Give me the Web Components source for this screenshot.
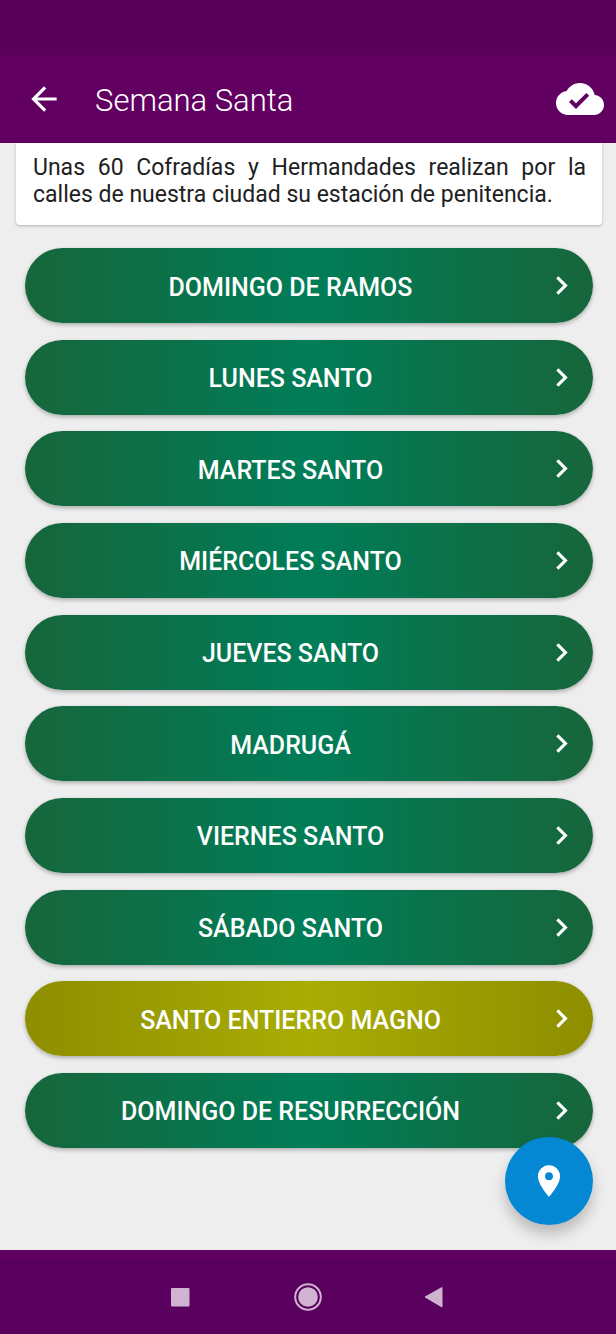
<!DOCTYPE html>
<html lang="es">
<head>
<meta charset="utf-8">
<meta name="viewport" content="width=device-width, initial-scale=1">
<title>Semana Santa</title>
<style>
  html { height: 100%; }
  body { margin: 0; min-height: 100%; display: flex; flex-direction: column; background: #eee; font-family: Roboto, "Noto Sans", sans-serif; }
</style>
</head>
<body>
<semana-app></semana-app>

<template id="app-tpl">
  <style>
    :host { display: flex; flex-direction: column; flex: 1; }
    main { flex: 1; display: flex; flex-direction: column; position: relative; }
    day-list { flex: 1; }
    map-fab { position: absolute; right: 23px; bottom: 25px; }
  </style>
  <app-header>Semana Santa</app-header>
  <main>
    <intro-card>Unas 60 Cofradías y Hermandades realizan por la calles de nuestra ciudad su estación de penitencia.</intro-card>
    <day-list>
      <day-button>Domingo de Ramos</day-button>
      <day-button>Lunes Santo</day-button>
      <day-button>Martes Santo</day-button>
      <day-button>Miércoles Santo</day-button>
      <day-button>Jueves Santo</day-button>
      <day-button>Madrugá</day-button>
      <day-button>Viernes Santo</day-button>
      <day-button>Sábado Santo</day-button>
      <day-button special>Santo Entierro Magno</day-button>
      <day-button>Domingo de Resurrección</day-button>
    </day-list>
    <map-fab></map-fab>
  </main>
  <system-nav></system-nav>
</template>

<template id="header-tpl">
  <style>
    :host { display: block; background: #620062; color: #fff; }
    .status { height: 55px; background: #5a005b; }
    .bar { display: flex; align-items: center; height: 88px; padding: 0 12px 0 25px; }
    button { border: 0; padding: 0; background: none; color: inherit; display: flex; }
    svg { display: block; fill: currentColor; }
    h1 { flex: 1; margin: 0 0 0 32px; padding-top: 3px; font-size: 31px; line-height: 40px; font-weight: 300; }
  </style>
  <div class="status"></div>
  <header class="bar">
    <button type="button" aria-label="Volver"><svg width="38" height="38" viewBox="0 0 24 24"><path d="M20 11H7.83l5.59-5.59L12 4l-8 8 8 8 1.41-1.41L7.83 13H20z"/></svg></button>
    <h1><slot></slot></h1>
    <button type="button" aria-label="Sincronizado"><svg width="48" height="48" viewBox="0 0 24 24"><path d="M19.35 10.04C18.67 6.59 15.64 4 12 4 9.11 4 6.6 5.64 5.35 8.04 2.34 8.36 0 10.91 0 14c0 3.31 2.69 6 6 6h13c2.76 0 5-2.24 5-5 0-2.64-2.05-4.78-4.65-4.96zM10 17l-3.5-3.5 1.41-1.41L10 14.17 15.18 9l1.41 1.41L10 17z"/></svg></button>
  </header>
</template>

<template id="card-tpl">
  <style>
    :host { display: block; margin: 0 14px 0 16px; padding: 11px 16px 17px 17px; background: #fff; color: #212121; border-radius: 0 0 4px 4px; box-shadow: 0 1px 3px rgba(0,0,0,.25); }
    p { margin: 0; font-size: 23px; line-height: 27px; text-align: justify; }
  </style>
  <p><slot></slot></p>
</template>

<template id="list-tpl">
  <style>
    :host { display: flex; flex-direction: column; justify-content: space-between; gap: 12px; padding: 23px 23px 102px 25px; }
  </style>
  <slot></slot>
</template>

<template id="day-tpl">
  <style>
    :host { display: block; --edge: #17663b; --mid: #007d58; }
    :host([special]) { --edge: #8e8e00; --mid: #a8ad04; }
    button { width: 100%; height: 75px; display: flex; align-items: center; border: 0; border-radius: 38px; padding: 0 13px; color: #fff; font: 500 25px/30px Roboto, sans-serif; text-transform: uppercase; background: linear-gradient(90deg, var(--edge), var(--mid) 50%, var(--edge)); box-shadow: 0 2px 4px rgba(0,0,0,.28); }
    span { flex: 1; padding-top: 4px; }
    svg { display: block; fill: currentColor; }
  </style>
  <button type="button"><span><slot></slot></span><svg width="37" height="37" viewBox="0 0 24 24" aria-hidden="true"><path d="M10 6 8.59 7.41 13.17 12l-4.58 4.59L10 18l6-6z"/></svg></button>
</template>

<template id="fab-tpl">
  <style>
    :host { display: block; }
    button { width: 88px; height: 88px; border: 0; padding: 0; border-radius: 50%; display: flex; align-items: center; justify-content: center; color: #fff; background: #0488d4; box-shadow: 0 9px 14px rgba(0,0,0,.22); }
    svg { fill: currentColor; }
  </style>
  <button type="button" aria-label="Mapa"><svg width="38" height="38" viewBox="0 0 24 24"><path d="M12 2C8.13 2 5 5.13 5 9c0 5.25 7 13 7 13s7-7.75 7-13c0-3.87-3.13-7-7-7zm0 9.5a2.5 2.5 0 0 1 0-5 2.5 2.5 0 0 1 0 5z"/></svg></button>
</template>

<template id="nav-tpl">
  <style>
    :host { display: block; background: #5a005e; border-top: 9px solid #620062; }
    nav { height: 75px; display: flex; align-items: center; justify-content: center; gap: 99px; }
    button { border: 0; padding: 0; background: none; color: #cfb3d1; }
    svg { display: block; fill: currentColor; }
  </style>
  <nav aria-label="Sistema">
    <button type="button" aria-label="Recientes"><svg width="28" height="28" viewBox="0 0 28 28"><rect x="4" y="5" width="18.500" height="18.500" rx="1"/></svg></button>
    <button type="button" aria-label="Inicio"><svg width="28" height="28" viewBox="0 0 28 28"><circle cx="14" cy="14" r="12.800" fill="none" stroke="currentColor" stroke-width="2"/><circle cx="14" cy="14" r="9.800"/></svg></button>
    <button type="button" aria-label="Atrás"><svg width="28" height="28" viewBox="0 0 28 28"><path d="M21 4.500v19.500L4 14z" stroke="currentColor" stroke-linejoin="round"/></svg></button>
  </nav>
</template>

<script>
  const define = (name, id) => customElements.define(name, class extends HTMLElement {
    constructor() {
      super();
      this.attachShadow({ mode: "open" }).append(document.getElementById(id).content.cloneNode(true));
    }
  });
  define("app-header", "header-tpl");
  define("intro-card", "card-tpl");
  define("day-list", "list-tpl");
  define("day-button", "day-tpl");
  define("map-fab", "fab-tpl");
  define("system-nav", "nav-tpl");
  define("semana-app", "app-tpl");
</script>
</body>
</html>
